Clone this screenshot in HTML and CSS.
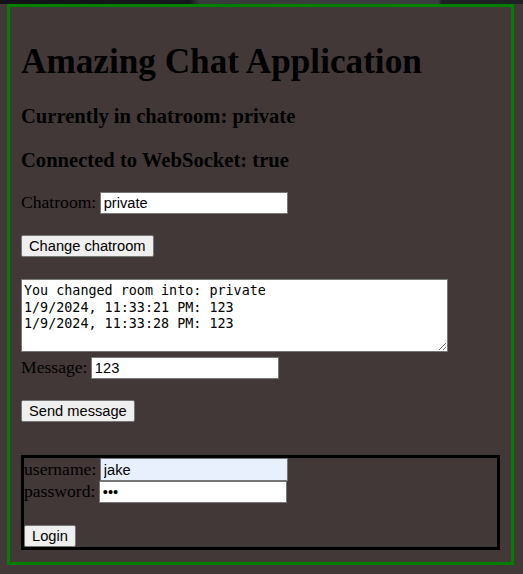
FILE: index.html
```html
<!DOCTYPE html>
<html>
<head>
<meta charset="utf-8">
<title>Amazing Chat Application</title>
<link rel="stylesheet" href="styles.css">
</head>
<body>
<div class="topbar"></div>
<div class="center">
  <h1 class="title">Amazing Chat Application</h1>
  <h3 class="subtitle">Currently in chatroom: private</h3>
  <h3 class="subtitle">Connected to WebSocket: true</h3>
  <form class="form">
    <label class="label" for="chatroom">Chatroom:</label>
    <input class="field" type="text" id="chatroom" value="private"><br><br>
    <input class="btn" type="submit" value="Change chatroom">
  </form>
  <br>
  <textarea class="messagearea" readonly rows="4" cols="50">You changed room into: private
1/9/2024, 11:33:21 PM: 123
1/9/2024, 11:33:28 PM: 123</textarea>
  <br>
  <form class="form">
    <label class="label" for="message">Message:</label>
    <input class="field" type="text" id="message" value="123"><br><br>
    <input class="btn" type="submit" value="Send message">
  </form>
  <div class="loginbox">
    <form class="form">
      <label class="label" for="username">username:</label>
      <input class="field field-auto" type="text" id="username" value="jake"><br>
      <label class="label" for="password">password:</label>
      <input class="field" type="password" id="password" value="123"><br><br>
      <input class="btn btn-login" type="submit" value="Login">
    </form>
  </div>
</div>
</body>
</html>
```
FILE: styles.css
```css
html, body {
  margin: 0;
  padding: 0;
}
body {
  background: #423838;
  font-family: "Liberation Serif", "Times New Roman", serif;
  font-size: 17.6px;
  color: #000;
  overflow: hidden;
}
.topbar {
  height: 4px;
  background: linear-gradient(to right, #101217 0, #16181d 190px, #3b3b3d 200px, #3d3d3f 438px, #202124 442px, #202124 100%);
}
.center {
  box-sizing: border-box;
  width: 507px;
  margin-left: 7px;
  border: 3px solid #008000;
  padding: 11px 11px 12px;
}
.title {
  font-size: 35.2px;
  font-weight: bold;
  margin: 23.6px 0;
}
.subtitle {
  font-size: 20.6px;
  font-weight: bold;
  margin: 20.6px 0;
}
.form {
  margin: 0;
}
.label {
  font-size: 17.6px;
  margin-right: -1px;
}
.field {
  box-sizing: border-box;
  width: 188px;
  height: 22px;
  font-family: "Liberation Sans", Arial, sans-serif;
  font-size: 14.67px;
  color: #000;
  border: 1px solid #767676;
  padding: 1px 3px;
  margin: 0;
  background: #fff;
}
.field-auto {
  background: #e8f0fe;
  height: 23px;
}
.btn {
  box-sizing: border-box;
  font-family: "Liberation Sans", Arial, sans-serif;
  font-size: 14.67px;
  color: #000;
  background: #efefef;
  border: 1px solid #767676;
  border-radius: 2px;
  padding: 1px 7px;
  margin: 0;
  height: 22px;
}
.btn-login {
  margin-top: 1px;
}
.messagearea {
  box-sizing: border-box;
  width: 427px;
  height: 73px;
  font-family: "DejaVu Sans Mono", "Liberation Mono", monospace;
  font-size: 13.4px;
  line-height: 16.3px;
  padding: 3px 2px 2px;
  border: 1px solid #767676;
  background: #fff;
  color: #000;
  margin: 1px 0 0;
}
.loginbox {
  border: 3px solid #000;
  margin-top: 33px;
}
```
